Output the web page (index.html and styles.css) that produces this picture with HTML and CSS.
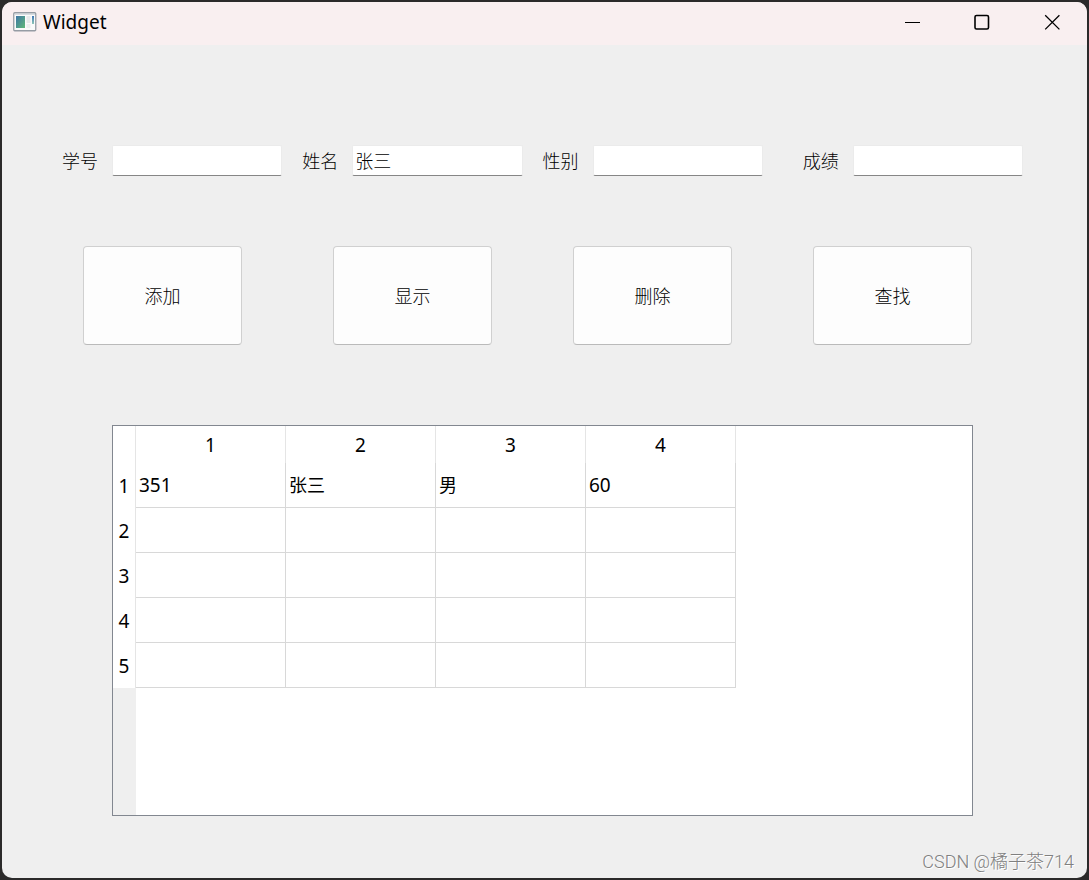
FILE: index.html
```
<!DOCTYPE html>
<html lang="zh-CN">
<head>
<meta charset="utf-8">
<title>Widget</title>
<link rel="stylesheet" href="styles.css">
</head>
<body class="desktop">
<div class="window">
  <header class="titlebar">
    <svg class="app-icon" width="24" height="20" viewBox="0 0 24 20" aria-hidden="true">
      <defs>
        <linearGradient id="pane" x1="0" y1="0" x2="1" y2="1"><stop offset="0" stop-color="#3f76a6"/><stop offset="1" stop-color="#5fb878"/></linearGradient>
        <linearGradient id="strip" x1="0" y1="0" x2="0" y2="1"><stop offset="0" stop-color="#3f76b6"/><stop offset="1" stop-color="#8fc8b8"/></linearGradient>
      </defs>
      <rect x="0.75" y="0.75" width="22" height="18" rx="1" fill="#fafafa" stroke="#969ca4" stroke-width="1.3"/>
      <path d="M2 2.2H22" stroke="#c9ced6"/>
      <rect x="3" y="4" width="9" height="12" fill="url(#pane)"/>
      <rect x="13.5" y="4" width="4" height="7" fill="#e6e8ea"/>
      <rect x="13.5" y="12" width="4" height="4" fill="#eceeef"/>
      <rect x="19" y="4" width="2" height="8" fill="url(#strip)"/>
    </svg>
    <h1 class="title">Widget</h1>
    <button class="caption" type="button" aria-label="Minimize"><svg width="16" height="16" viewBox="0 0 16 16"><path d="M1 8.5H16"/></svg></button>
    <button class="caption" type="button" aria-label="Maximize"><svg width="16" height="16" viewBox="0 0 16 16"><rect class="thick" x="1" y="1.5" width="13.5" height="13.5" rx="1.5"/></svg></button>
    <button class="caption" type="button" aria-label="Close"><svg width="16" height="16" viewBox="0 0 16 16"><path class="thin" d="M1.2 1.2 15.4 15.4M15.4 1.2 1.2 15.4"/></svg></button>
  </header>
  <main class="content">
    <form class="fields">
      <div class="field"><label for="sid">学号</label><input id="sid" type="text"></div>
      <div class="field"><label for="name">姓名</label><input id="name" type="text" value="张三"></div>
      <div class="field"><label for="sex">性别</label><input id="sex" type="text"></div>
      <div class="field field-last"><label for="score">成绩</label><input id="score" type="text"></div>
    </form>
    <div class="actions">
      <button class="action action-first" type="button">添加</button>
      <button class="action" type="button">显示</button>
      <button class="action" type="button">删除</button>
      <button class="action" type="button">查找</button>
    </div>
    <div class="table-view">
      <table class="grid">
        <thead>
          <tr><td class="corner"></td><th scope="col">1</th><th scope="col">2</th><th scope="col">3</th><th scope="col">4</th></tr>
        </thead>
        <tbody>
          <tr><th scope="row">1</th><td>351</td><td class="han">张三</td><td class="han">男</td><td>60</td></tr>
          <tr><th scope="row">2</th><td></td><td></td><td></td><td></td></tr>
          <tr><th scope="row">3</th><td></td><td></td><td></td><td></td></tr>
          <tr><th scope="row">4</th><td></td><td></td><td></td><td></td></tr>
          <tr><th scope="row">5</th><td></td><td></td><td></td><td></td></tr>
        </tbody>
      </table>
    </div>
  </main>
  <div class="watermark">CSDN @橘子茶714</div>
</div>
</body>
</html>
```
FILE: styles.css
```
* { box-sizing: border-box; }

.desktop {
  margin: 0;
  min-height: 100vh;
  padding: 2px;
  display: flex;
  background: #2b2a2a;
  font-family: "Noto Sans", "Noto Sans CJK SC", sans-serif;
  font-size: 19px;
  color: #000;
}

.window {
  position: relative;
  flex: 1;
  display: flex;
  flex-direction: column;
  border-radius: 10px;
  overflow: hidden;
  background: #efefef;
}

.titlebar {
  display: flex;
  align-items: center;
  height: 43px;
  padding-left: 11px;
  background: #f9eff0;
}

.app-icon { margin-bottom: 3px; }

.title {
  flex: 1;
  margin: 0 0 3px 6px;
  font-size: 19px;
  font-weight: 400;
  line-height: 24px;
}

.caption {
  width: 70px;
  height: 43px;
  padding: 0 0 3px;
  border: 0;
  background: none;
  display: flex;
  align-items: center;
  justify-content: center;
}

.caption svg { fill: none; stroke: #000; stroke-width: 1; }
.caption .thick { stroke-width: 1.6; }
.caption .thin { stroke-width: 1.3; }

.content {
  flex: 1;
  display: flex;
  flex-direction: column;
  padding: 100px 0 62px;
}

.fields {
  display: flex;
  gap: 20px;
  padding: 0 64px 0 60px;
}

.field {
  flex: 1;
  min-width: 0;
  display: flex;
  align-items: center;
}

.field-last { margin-left: 20px; }

.field label {
  width: 50px;
  flex: none;
  padding-bottom: 2px;
}

.field label, .field input, .action {
  font-family: "Noto Sans CJK SC", sans-serif;
  font-size: 18px;
  font-weight: 300;
  line-height: 24px;
  color: #000;
}

.field input {
  flex: 1;
  min-width: 0;
  height: 31px;
  padding: 0 2px 2px;
  border: 1px solid #ebebeb;
  border-bottom-color: #868686;
  border-radius: 2px;
  background: #fff;
}

.actions {
  display: flex;
  gap: 81px;
  padding: 0 115px 0 81px;
  margin-top: 70px;
}

.action {
  flex: 1;
  height: 99px;
  padding: 0 0 2px;
  border: 1px solid #d0d0d0;
  border-bottom-color: #bababa;
  border-radius: 4px;
  background: #fdfdfd;
}

.action-first { margin-right: 10px; }

.table-view {
  flex: 1;
  margin: 80px 114px 0 110px;
  border: 1px solid #828790;
  background: linear-gradient(to right, #efefef 23px, #fff 23px);
}

.grid {
  border-collapse: separate;
  border-spacing: 0;
  table-layout: fixed;
  width: 623px;
  background: #fff;
  line-height: 24px;
}

.grid th, .grid td {
  width: 150px;
  height: 45px;
  padding: 0 3px;
  border: 0 solid #d8d8d8;
  border-width: 0 1px 1px 0;
  text-align: left;
  font-weight: 400;
}

.grid .han { font-size: 18px; }

.grid thead th, .grid .corner {
  height: 37px;
  border-width: 0 1px 0 0;
  border-color: #e5e5e5;
  text-align: center;
}

.grid .corner, .grid tbody th {
  width: 23px;
  padding: 0;
  border-width: 0 1px 0 0;
  border-color: #e5e5e5;
  text-align: center;
}

.watermark {
  position: absolute;
  right: 13px;
  bottom: 4px;
  font-family: Roboto, "Noto Sans CJK SC", sans-serif;
  font-size: 18px;
  font-weight: 300;
  line-height: 24px;
  color: #808080;
  text-shadow: 1px 1px 0 #fff;
}
```
